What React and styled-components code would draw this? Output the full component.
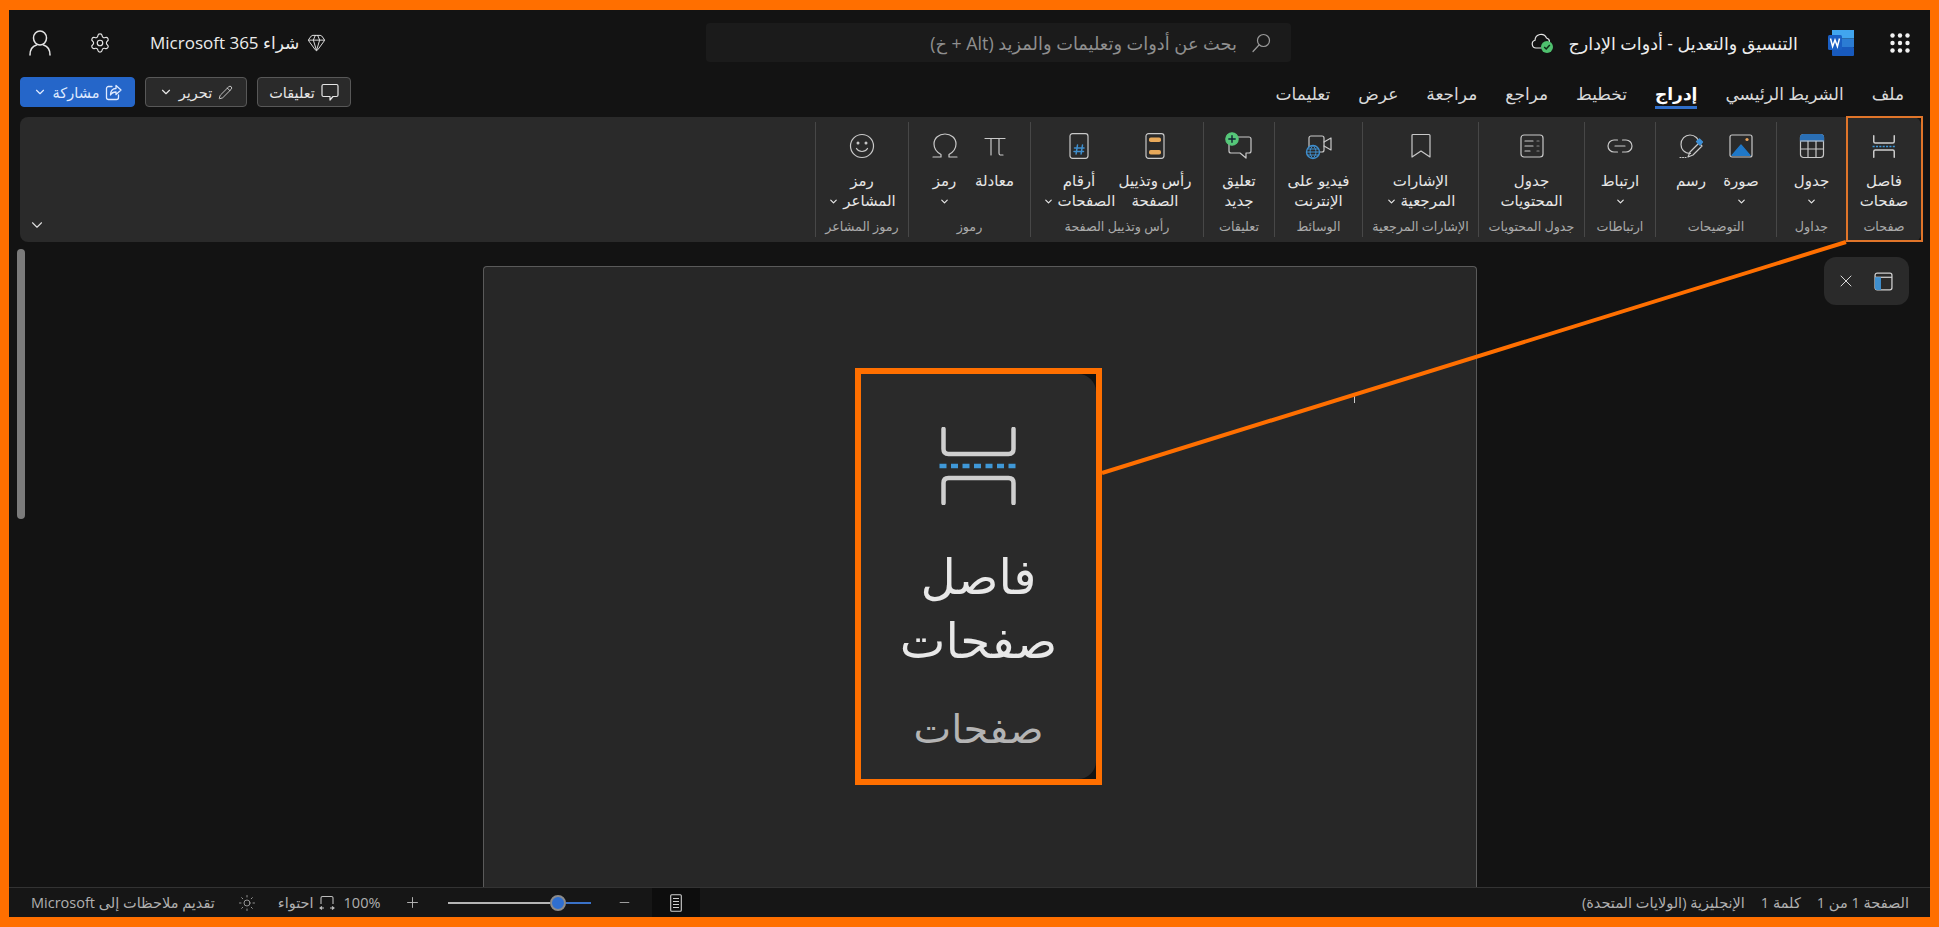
import React from "react";
import styled, { createGlobalStyle } from "styled-components";
import { Settings, Gem, Pencil, X, ChevronDown, Plus, Minus, Sun } from "lucide-react";

const Global = createGlobalStyle`
  html, body { margin: 0; padding: 0; background: #ff6f00; }
  body { font-family: "Open Sans", "Noto Sans", "DejaVu Sans", sans-serif; color: #e8e8e8; }
  * { box-sizing: border-box; }
`;

const Frame = styled.div`
  position: relative; width: 1939px; height: 927px; overflow: hidden;
  border-style: solid; border-color: #ff6f00; border-width: 10px 9px 10px 9px;
  background: #131313; display: flex; flex-direction: column;
`;
const TitleBar = styled.header`
  height: 67px; flex: none; display: grid; grid-template-columns: 697px 585px 1fr; align-items: start; padding-top: 13px;
`;
const TitleLeft = styled.div`display: flex; align-items: center; height: 39px; padding-left: 20px;`;
const IconBtn = styled.span`display: inline-flex; align-items: center; justify-content: center; color: #e4e4e4; margin-right: ${p => p.$mr || 0}px;`;
const BuyLabel = styled.span`font-size: 17px; color: #ececec; margin-right: 8px; white-space: nowrap;`;
const SearchBox = styled.div`
  height: 39px; background: #1b1b1b; border-radius: 4px; display: flex; align-items: center; direction: rtl; padding-right: 20px; gap: 14px; color: #8f8f8f; font-size: 17.8px;
`;
const TitleRight = styled.div`display: flex; align-items: center; justify-content: flex-end; height: 39px; padding-right: 20px;`;
const DocTitle = styled.span`font-size: 17.5px; color: #ededed; direction: rtl; white-space: nowrap; margin: 0 30px 0 14px;`;
const TabRow = styled.div`height: 40px; flex: none; display: flex; justify-content: space-between; padding: 0 26px 0 11px; align-items: flex-start;`;
const Actions = styled.div`display: flex; gap: 10px;`;
const ActionBtn = styled.button`
  height: 30px; width: ${p => p.$w}px; padding: 0; direction: rtl; display: flex; align-items: center; justify-content: center; gap: 6px; font: inherit; font-size: 14.5px;
  border-radius: 4px; color: ${p => p.$primary ? "#dfeaff" : "#e6e6e6"}; background: ${p => p.$primary ? "#2566c9" : "#2a2a2a"}; border: 1px solid ${p => p.$primary ? "#2566c9" : "#585858"};
`;
const Tabs = styled.nav`display: flex; direction: rtl; gap: 28px;`;
const Tab = styled.span`
  height: 32px; line-height: 33px; font-size: 17px; color: ${p => p.$active ? "#fff" : "#d9d9d9"}; font-weight: ${p => p.$active ? 700 : 400}; white-space: nowrap;
  border-bottom: 3px solid ${p => p.$active ? "#2f6ec9" : "transparent"};
`;
const Ribbon = styled.section`
  height: 125px; flex: none; margin: 0 9px 0 11px; background: #2a2a2a; border-radius: 8px; display: flex; direction: rtl; position: relative; padding: 5px 0;
`;
const Group = styled.div`
  width: ${p => p.$w}px; flex: none; display: flex; flex-direction: column; padding-top: 6px;
  border-left: 1px solid #474747;
  &:first-child { border-left-color: transparent; }
`;
const Items = styled.div`display: flex; justify-content: center;`;
const Item = styled.div`width: ${p => p.$w}px; flex: none; display: flex; flex-direction: column; align-items: center;`;
const IconSlot = styled.div`height: 36px; display: flex; align-items: center; justify-content: center;`;
const ItemText = styled.div`margin-top: 7px; font-size: 15px; line-height: 19.5px; color: #e6e6e6; text-align: center; white-space: nowrap; svg { vertical-align: -1px; }`;
const GroupLabel = styled.div`margin-top: auto; margin-bottom: 2px; height: 18px; line-height: 18px; font-size: 12.7px; color: #aaa; text-align: center; white-space: nowrap;`;
const Collapse = styled.span`position: absolute; left: 8px; bottom: 8px; display: flex; color: #ddd;`;
const Workspace = styled.main`flex: 1; min-height: 0; position: relative; display: flex; padding: 24px 0 0 474px;`;
const Page = styled.div`width: 994px; position: relative; background: #272727; border: 1px solid #5a5a5a; border-bottom: none; border-radius: 4px 4px 0 0;`;
const Caret = styled.span`position: absolute; left: 870px; top: 127px; width: 1px; height: 9px; background: #ccc;`;
const Scrollbar = styled.div`position: absolute; left: 8px; top: 7px; width: 8px; height: 270px; border-radius: 4px; background: #7b7b7b;`;
const FloatPanel = styled.div`position: absolute; right: 21px; top: 15px; width: 85px; height: 48px; border-radius: 12px; background: #2a2a2a; display: flex; align-items: center; justify-content: center; gap: 18px; color: #d8d8d8; padding-right: 4px;`;
const StatusBar = styled.footer`height: 30px; flex: none; display: flex; justify-content: space-between; align-items: center; background: #161616; border-top: 1px solid #333; color: #b0b0b0; font-size: 14.5px; padding: 0 21px 0 22px;`;
const StatusLeft = styled.div`display: flex; align-items: center; height: 100%;`;
const StatusText = styled.span`direction: rtl; white-space: nowrap; margin-right: ${p => p.$mr || 0}px; flex: none; text-align: center;`;
const StatusIcon = styled.span`display: flex; flex: none; margin-right: ${p => p.$mr || 0}px; color: #bdbdbd;`;
const Slider = styled.div`display: flex; align-items: center; width: 143px; margin-right: 26px;`;
const Track = styled.span`height: 2px; flex: none; width: ${p => p.$w}px; background: ${p => p.$blue ? "#3a72c8" : "#b5b5b5"};`;
const Thumb = styled.span`width: 16px; height: 16px; flex: none; border-radius: 50%; background: #2f6fd0; border: 2px solid #8b8b8b;`;
const ViewCell = styled.span`width: 48px; height: 100%; flex: none; background: #0d0d0d; display: flex; align-items: center; justify-content: center; color: #c8c8c8; margin-left: 20px;`;
const StatusRight = styled.div`display: flex; direction: rtl; gap: 16px; white-space: nowrap;`;
const Highlight = styled.div`position: absolute; left: 1837px; top: 106px; width: 77px; height: 126px; border: 2px solid #e0752a;`;
const Callout = styled.div`position: absolute; left: 846px; top: 358px; width: 247px; height: 417px; border: 6px solid #ff6f00; background: #131313;`;
const CalloutFill = styled.div`height: 100%; background: #2a2a2a; border-radius: 0 18px 18px 0; display: flex; flex-direction: column; align-items: center; padding-top: 53px;`;
const CalloutText = styled.div`margin-top: 38px; font-size: 48.5px; line-height: 64px; color: #e8e8e8; text-align: center; white-space: nowrap;`;
const CalloutLabel = styled.div`margin-top: 32px; font-size: 40px; line-height: 50px; color: #b4b4b4;`;
const Leader = styled.svg`position: absolute; left: 0; top: 0; pointer-events: none;`;

const S = { fill: "none", stroke: "#c9c9c9", strokeWidth: 1.2, strokeLinecap: "round", strokeLinejoin: "round" };
const Svg = ({ w = 26, h = 26, children }) => <svg width={w} height={h} viewBox="0 0 26 26" {...S}>{children}</svg>;

const BreakIcon = ({ w = 24, h = 25, sw = 5 }) => (
  <svg width={w} height={h} viewBox="-4 0 82 78" fill="none" strokeLinecap="round">
    <path d="M2 2V22q0 5 5 5H67q5 0 5-5V2" stroke="#cfcfcf" strokeWidth={sw} />
    <path d="M-2 39H78" stroke="#3f98d8" strokeWidth={sw} strokeDasharray="7 4.5" strokeLinecap="butt" />
    <path d="M2 76V56q0-5 5-5H67q5 0 5 5V76" stroke="#cfcfcf" strokeWidth={sw} />
  </svg>
);
const TableIcon = () => <Svg><rect x="1.5" y="1.5" width="23" height="23" rx="3" /><path d="M1.5 8V4.5a3 3 0 0 1 3-3h17a3 3 0 0 1 3 3V8z" fill="#2a6fb5" stroke="#2a6fb5" /><path d="M1.5 8H24.5M1.5 16H24.5M9 8V24.5M17 8V24.5" /></Svg>;
const ImageIcon = () => <Svg><rect x="2" y="2" width="22" height="22" rx="2" /><path d="M4 22.5 13 12l9 10.5z" fill="#1f78c8" stroke="#1f78c8" /><circle cx="19" cy="6.5" r="1.6" fill="#e9a35a" stroke="none" /></Svg>;
const DrawIcon = () => <Svg><path d="M12.5 20.5C6 20.5 3 16 3 11.5 3 6 7 2 12 2s9 4 9 8" /><path d="M10 24l2-5 9-9 3 3-9 9z" /><path d="M18.5 8.5l3-2.5 3 3-2.6 3.2z" fill="#3d8fd6" stroke="#3d8fd6" /><path d="M2 24.5h6" strokeDasharray="1 1.6" /></Svg>;
const LinkIcon = () => <Svg><path d="M10.5 7H7a6 6 0 0 0 0 12h3.5M15.5 7H19a6 6 0 0 1 0 12h-3.5M8 13h10" /></Svg>;
const TocIcon = () => <Svg><rect x="2" y="2" width="22" height="22" rx="3" /><path d="M6 8h8M6 13h8M6 18h5" /><path d="M18 8h2M18 13h2M18 18h2" stroke="#888" /></Svg>;
const BookmarkIcon = () => <Svg><path d="M5 1.5h16a1 1 0 0 1 1 1V24l-9-6-9 6V2.5a1 1 0 0 1 1-1z" /></Svg>;
const VideoIcon = () => (
  <svg width="28" height="28" viewBox="0 0 28 28" {...S}>
    <path d="M4 15V6a2 2 0 0 1 2-2h11a2 2 0 0 1 2 2v12a2 2 0 0 1-2 2h-3" /><path d="M19 10l7-4v12l-7-4" />
    <circle cx="8" cy="20" r="6.5" fill="#2a2a2a" stroke="#3f8fce" strokeWidth="1.4" />
    <path d="M1.5 20h13M8 13.5c-4 4-4 9 0 13M8 13.5c4 4 4 9 0 13M2.5 17h11M2.5 23h11" stroke="#3f8fce" strokeWidth="1" />
  </svg>
);
const NewCommentIcon = () => (
  <svg width="28" height="28" viewBox="0 0 28 28" {...S}>
    <path d="M4 9V19a2 2 0 0 0 2 2h9l6 5v-5h3a2 2 0 0 0 2-2V7a2 2 0 0 0-2-2H12" />
    <circle cx="7" cy="7" r="6.2" fill="#56c779" stroke="#56c779" />
    <path d="M7 3.8v6.4M3.8 7h6.4" stroke="#123" strokeWidth="1.4" />
  </svg>
);
const HeaderIcon = () => <svg width="20" height="26" viewBox="0 0 20 26" {...S}><rect x="1" y=".7" width="18" height="24.6" rx="2.5" /><rect x="4" y="4.5" width="12" height="4.5" rx="1.8" fill="#e8a95a" stroke="none" /><rect x="4" y="17" width="12" height="4.5" rx="1.8" fill="#e8a95a" stroke="none" /></svg>;
const NumberIcon = () => <svg width="20" height="26" viewBox="0 0 20 26" {...S}><rect x="1" y=".7" width="18" height="24.6" rx="2.5" /><path d="M8.5 12l-1.4 9M13.5 12l-1.4 9M5.5 15h9.5M5 18.4h9.500" stroke="#3f8fce" strokeWidth="1.5" /></svg>;
const PiIcon = () => <Svg><path d="M3 5.5h20M9 5.5V22M17 5.5V20q0 2.2 2.4 2H21" /></Svg>;
const OmegaIcon = () => <svg width="28" height="28" viewBox="0 0 28 28" {...S}><path d="M2 25h8v-2.5C5.5 20 3 16.5 3 12 3 6 8 2 14 2s11 4 11 10c0 4.5-2.5 8-7 10.5V25h8" /></svg>;
const SmileIcon = () => <Svg><circle cx="13" cy="13" r="11.5" /><circle cx="9" cy="10" r=".9" fill="#c9c9c9" /><circle cx="17" cy="10" r=".9" fill="#c9c9c9" /><path d="M7.5 15.5c2.5 4 8.5 4 11 0" /></Svg>;
const UserIcon = () => <svg width="22" height="26" viewBox="0 0 22 26" fill="none" stroke="#e4e4e4" strokeWidth="1.5" strokeLinecap="round"><ellipse cx="11" cy="8" rx="6.5" ry="7" /><path d="M1 25c0-6 3-9 6.5-10M21 25c0-6-3-9-6.5-10" /></svg>;
const SearchIcon = () => <svg width="20" height="20" viewBox="0 0 20 20" fill="none" stroke="#9a9a9a" strokeWidth="1.2" strokeLinecap="round"><circle cx="12.5" cy="7.5" r="6" /><path d="M8 12 2 18.5" /></svg>;
const CloudIcon = () => <svg width="24" height="24" viewBox="0 0 24 24" fill="none" stroke="#e6e6e6" strokeWidth="1.2"><path d="M10 17H5a4 4 0 0 1-1-7.8A6 6 0 0 1 15.5 7a4 4 0 0 1 3 4" strokeLinecap="round" /><circle cx="16" cy="16" r="6" fill="#4fc06e" stroke="none" /><path d="M13.2 16l2 2 3.6-4" stroke="#0d2a16" strokeWidth="1.5" /></svg>;
const WordIcon = () => (
  <svg width="26" height="26" viewBox="0 0 26 26">
    <rect x="4" y="0" width="22" height="8.5" fill="#41a5ee" /><rect x="4" y="8.5" width="22" height="8.5" fill="#2b7cd3" /><rect x="4" y="17" width="22" height="9" rx="1" fill="#185abd" />
    <rect x="0" y="5" width="14" height="15" rx="1.5" fill="#1a5fc4" />
    <path d="M2.5 8.5 4.6 16.5 7 10 9.4 16.5 11.5 8.5" fill="none" stroke="#fff" strokeWidth="1.5" />
  </svg>
);
const WaffleIcon = () => (
  <svg width="20" height="20" viewBox="0 0 20 20" fill="#f2f2f2">
    {[2.5, 10, 17.5].flatMap(y => [2.5, 10, 17.5].map(x => <circle key={x + "-" + y} cx={x} cy={y} r="2.2" />))}
  </svg>
);
const PanelIcon = () => <svg width="19" height="19" viewBox="0 0 18 18" fill="none" stroke="#d0d0d0" strokeWidth="1.2"><rect x="1" y="1" width="16" height="16" rx="2" /><path d="M1 5H17" /><path d="M1.5 5.5H6V16.5H3a1.5 1.5 0 0 1-1.5-1.5z" fill="#3f8fce" stroke="#3f8fce" /></svg>;
const CommentIcon = () => <svg width="18" height="18" viewBox="0 0 18 18" fill="none" stroke="#e6e6e6" strokeWidth="1.2" strokeLinejoin="round"><path d="M2.5 1.5h13a1.5 1.5 0 0 1 1.5 1.5v9a1.5 1.5 0 0 1-1.5 1.5H12L9 17v-3.5H2.5A1.5 1.5 0 0 1 1 12V3a1.5 1.5 0 0 1 1.5-1.5z" /></svg>;
const ShareIcon = () => <svg width="17" height="17" viewBox="0 0 17 17" fill="none" stroke="#dfeaff" strokeWidth="1.3" strokeLinecap="round" strokeLinejoin="round"><path d="M7 2.5H3.5A2 2 0 0 0 1.5 4.5v9a2 2 0 0 0 2 2h8a2 2 0 0 0 2-2V11" /><path d="M11 1.5 16 6l-5 4.5V8C8.5 8 6.5 9 5.5 11c0-4 2-6.5 5.500-6.500z" /></svg>;
const FitIcon = () => <svg width="16" height="16" viewBox="0 0 16 16" fill="none" stroke="#bdbdbd" strokeWidth="1.1"><path d="M2 9V3a1.5 1.5 0 0 1 1.5-1.5h9A1.5 1.5 0 0 1 14 3v6M1 13h4M3 11.5 1 13l2 1.5M15 13h-4M13 11.5l2 1.5-2 1.5" /></svg>;
const PageViewIcon = () => <svg width="12" height="18" viewBox="0 0 12 18" fill="none" stroke="#cfcfcf" strokeWidth="1.1"><rect x=".7" y=".7" width="10.6" height="16.6" rx="1" /><path d="M3 4.5h6M3 7.5h6M3 10.5h6M3 13.5h6" /></svg>;

const Chev = ({ size = 11 }) => <ChevronDown size={size} strokeWidth={2.6} />;

const groups = [
  { w: 75, label: "صفحات", items: [{ w: 75, icon: <BreakIcon />, l: ["فاصل", "صفحات"] }] },
  { w: 70, label: "جداول", items: [{ w: 69, icon: <TableIcon />, l: ["جدول", <Chev key="c" />] }] },
  { w: 121, label: "التوضيحات", items: [{ w: 50, icon: <ImageIcon />, l: ["صورة", <Chev key="c" />] }, { w: 50, icon: <DrawIcon />, l: ["رسم"] }] },
  { w: 71, label: "ارتباطات", items: [{ w: 70, icon: <LinkIcon />, l: ["ارتباط", <Chev key="c" />] }] },
  { w: 106, label: "جدول المحتويات", items: [{ w: 105, icon: <TocIcon />, l: ["جدول", "المحتويات"] }] },
  { w: 116, label: "الإشارات المرجعية", items: [{ w: 115, icon: <BookmarkIcon />, l: ["الإشارات", <>المرجعية <Chev /></>] }] },
  { w: 88, label: "الوسائط", items: [{ w: 87, icon: <VideoIcon />, l: ["فيديو على", "الإنترنت"] }] },
  { w: 71, label: "تعليقات", items: [{ w: 70, icon: <NewCommentIcon />, l: ["تعليق", "جديد"] }] },
  { w: 173, label: "رأس وتذييل الصفحة", items: [{ w: 76, icon: <HeaderIcon />, l: ["رأس وتذييل", "الصفحة"] }, { w: 76, icon: <NumberIcon />, l: ["أرقام", <>الصفحات <Chev /></>] }] },
  { w: 122, label: "رموز", items: [{ w: 50, icon: <PiIcon />, l: ["معادلة"] }, { w: 50, icon: <OmegaIcon />, l: ["رمز", <Chev key="c" />] }] },
  { w: 93, label: "رموز المشاعر", items: [{ w: 92, icon: <SmileIcon />, l: ["رمز", <>المشاعر <Chev /></>] }] },
];
const tabs = ["ملف", "الشريط الرئيسي", "إدراج", "تخطيط", "مراجع", "مراجعة", "عرض", "تعليمات"];

export default function App() {
  return (
    <>
      <Global />
      <Frame>
        <TitleBar>
          <TitleLeft>
            <IconBtn $mr={38}><UserIcon /></IconBtn>
            <IconBtn $mr={39}><Settings size={22} strokeWidth={1.3} /></IconBtn>
            <BuyLabel dir="rtl">شراء Microsoft 365</BuyLabel>
            <IconBtn><Gem size={19} strokeWidth={1.2} /></IconBtn>
          </TitleLeft>
          <SearchBox><SearchIcon /><span>بحث عن أدوات وتعليمات والمزيد (Alt + خ)</span></SearchBox>
          <TitleRight>
            <CloudIcon />
            <DocTitle>التنسيق والتعديل - أدوات الإدارج</DocTitle>
            <IconBtn $mr={36}><WordIcon /></IconBtn>
            <WaffleIcon />
          </TitleRight>
        </TitleBar>
        <TabRow>
          <Actions>
            <ActionBtn $primary $w={115}><ShareIcon />مشاركة<ChevronDown size={14} /></ActionBtn>
            <ActionBtn $w={102}><Pencil size={15} strokeWidth={1.3} />تحرير<ChevronDown size={14} /></ActionBtn>
            <ActionBtn $w={94}><CommentIcon />تعليقات</ActionBtn>
          </Actions>
          <Tabs>{tabs.map(t => <Tab key={t} $active={t === "إدراج"}>{t}</Tab>)}</Tabs>
        </TabRow>
        <Ribbon>
          {groups.map(g => (
            <Group key={g.label} $w={g.w}>
              <Items>
                {g.items.map((it, i) => (
                  <Item key={i} $w={it.w}>
                    <IconSlot>{it.icon}</IconSlot>
                    <ItemText>{it.l.map((line, j) => <div key={j}>{line}</div>)}</ItemText>
                  </Item>
                ))}
              </Items>
              <GroupLabel>{g.label}</GroupLabel>
            </Group>
          ))}
          <Collapse><ChevronDown size={18} strokeWidth={1.5} /></Collapse>
        </Ribbon>
        <Workspace>
          <Scrollbar />
          <Page><Caret /></Page>
          <FloatPanel><X size={20} strokeWidth={1.2} /><PanelIcon /></FloatPanel>
        </Workspace>
        <StatusBar>
          <StatusLeft>
            <StatusText $mr={23}>تقديم ملاحظات إلى Microsoft</StatusText>
            <StatusIcon $mr={22}><Sun size={18} strokeWidth={1} /></StatusIcon>
            <StatusText $mr={5}>احتواء</StatusText>
            <StatusIcon $mr={9}><FitIcon /></StatusIcon>
            <StatusText $mr={24}>100%</StatusText>
            <StatusIcon $mr={27}><Plus size={17} strokeWidth={1.3} /></StatusIcon>
            <Slider><Track $w={102} /><Thumb /><Track $blue $w={25} /></Slider>
            <StatusIcon><Minus size={15} strokeWidth={1.3} /></StatusIcon>
            <ViewCell><PageViewIcon /></ViewCell>
          </StatusLeft>
          <StatusRight>
            <span>الصفحة 1 من 1</span><span>كلمة 1</span><span>الإنجليزية (الولايات المتحدة)</span>
          </StatusRight>
        </StatusBar>
        <Highlight />
        <Leader width="1921" height="907" viewBox="0 0 1921 907"><path d="M1093 463 1837 232" stroke="#ff6f00" strokeWidth="4" /></Leader>
        <Callout>
          <CalloutFill>
            <BreakIcon w={83} h={78} sw={4.5} />
            <CalloutText>فاصل<br />صفحات</CalloutText>
            <CalloutLabel>صفحات</CalloutLabel>
          </CalloutFill>
        </Callout>
      </Frame>
    </>
  );
}
